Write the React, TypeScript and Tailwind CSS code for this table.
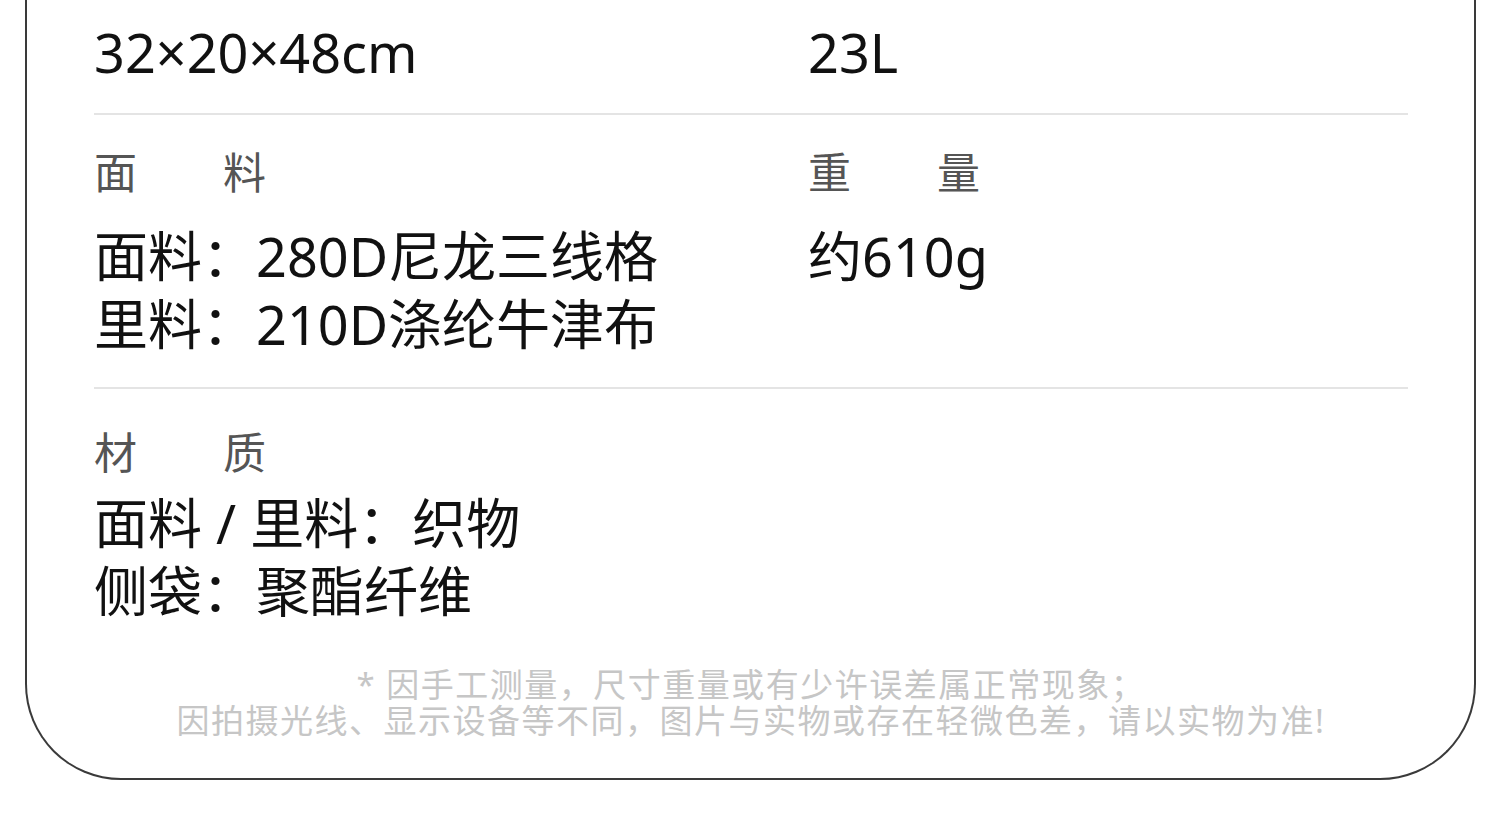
import React from 'react';

const font = { fontFamily: '"Noto Sans", "Noto Sans CJK SC", sans-serif' };

function Label({ text }: { text: string }) {
  return <div className="text-[43px] leading-[56px] text-[#555]">{text}</div>;
}

function Value({ lines }: { lines: string[] }) {
  return (
    <div className="text-[54px] leading-[68px] text-[#111]">
      {lines.map((l) => (
        <div key={l}>{l}</div>
      ))}
    </div>
  );
}

export default function App() {
  return (
    <div className="w-[1500px] h-[840px] bg-white overflow-hidden" style={font}>
      <div className="ml-[25px] w-[1451px] border-2 border-t-0 border-[#3a3a3a] rounded-b-[96px] pl-[67px] pr-[66px] pb-[39px]">
        {/* size / volume */}
        <div className="grid grid-cols-[714px_1fr] pt-[18px]">
          <Value lines={['32×20×48cm']} />
          <Value lines={['23L']} />
        </div>
        <div className="mt-[27px] h-[2px] bg-[#e4e4e4]" />

        {/* fabric / weight */}
        <div className="grid grid-cols-[714px_1fr] pt-[30px]">
          <div>
            <Label text="面　　料" />
            <div className="mt-[21px]">
              <Value lines={['面料：280D尼龙三线格', '里料：210D涤纶牛津布']} />
            </div>
          </div>
          <div>
            <Label text="重　　量" />
            <div className="mt-[21px]">
              <Value lines={['约610g']} />
            </div>
          </div>
        </div>
        <div className="mt-[29px] h-[2px] bg-[#e4e4e4]" />

        {/* material */}
        <div className="pt-[36px]">
          <Label text="材　　质" />
          <div className="mt-[8px]">
            <Value lines={['面料 / 里料：织物', '侧袋：聚酯纤维']} />
          </div>
        </div>

        {/* note */}
        <div className="mt-[42px] text-center text-[33px] leading-[36px] tracking-[1.5px] text-[#c6c6c6]">
          <div>* 因手工测量，尺寸重量或有少许误差属正常现象；</div>
          <div>因拍摄光线、显示设备等不同，图片与实物或存在轻微色差，请以实物为准!</div>
        </div>
      </div>
    </div>
  );
}
